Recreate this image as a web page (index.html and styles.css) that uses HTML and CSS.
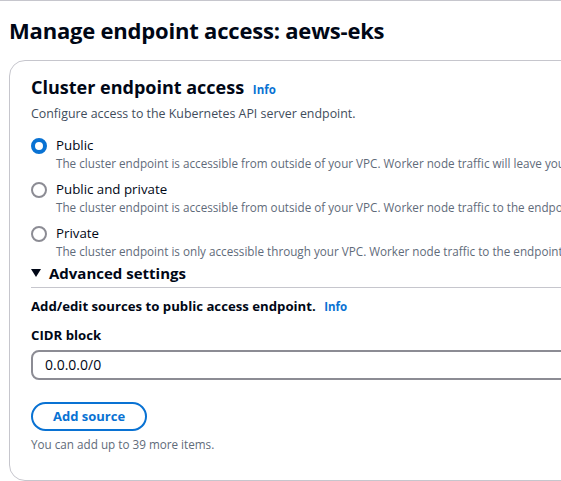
FILE: index.html
```html
<!DOCTYPE html>
<html lang="en">
<head>
<meta charset="utf-8">
<link rel="stylesheet" href="styles.css">
</head>
<body>
<div class="page">
  <h1 class="title">Manage endpoint access: aews-eks</h1>
  <div class="card">
    <div class="card-head">
      <h2 class="card-title">Cluster endpoint access <a class="info" href="#">Info</a></h2>
      <p class="card-desc">Configure access to the Kubernetes API server endpoint.</p>
    </div>
    <div class="radios">
      <label class="radio">
        <span class="dot checked"></span>
        <span class="rtext">
          <span class="rlabel">Public</span>
          <span class="rdesc">The cluster endpoint is accessible from outside of your VPC. Worker node traffic will leave your VPC to connect to the endpoint.</span>
        </span>
      </label>
      <label class="radio">
        <span class="dot"></span>
        <span class="rtext">
          <span class="rlabel">Public and private</span>
          <span class="rdesc">The cluster endpoint is accessible from outside of your VPC. Worker node traffic to the endpoint will stay within your VPC.</span>
        </span>
      </label>
      <label class="radio">
        <span class="dot"></span>
        <span class="rtext">
          <span class="rlabel">Private</span>
          <span class="rdesc">The cluster endpoint is only accessible through your VPC. Worker node traffic to the endpoint will stay within your VPC.</span>
        </span>
      </label>
    </div>
    <div class="adv">
      <div class="adv-head"><span class="caret"></span>Advanced settings</div>
      <div class="adv-body">
        <div class="sources">Add/edit sources to public access endpoint. <a class="info" href="#">Info</a></div>
        <div class="field-label">CIDR block</div>
        <div class="input">0.0.0.0/0</div>
        <button class="btn">Add source</button>
        <div class="hint">You can add up to 39 more items.</div>
      </div>
    </div>
  </div>
</div>
</body>
</html>
```
FILE: styles.css
```css
html, body {
  margin: 0;
  padding: 0;
  background: #ffffff;
  overflow: hidden;
}
body {
  font-family: "Open Sans", "Noto Sans", sans-serif;
  color: #000716;
  border-top: 1px solid #c6c6cd;
}
.page {
  padding: 0 0 0 9px;
  width: 800px;
}
.title {
  margin: 0;
  padding-top: 12px;
  font-size: 22px;
  line-height: 34px;
  font-weight: 700;
  letter-spacing: -0.2px;
}
.card {
  margin-top: 13px;
  border: 1px solid #c6c6cd;
  border-radius: 16px;
  padding: 12px 20px 20px 21px;
  height: 387px;
}
.card-title {
  margin: 0;
  font-size: 18px;
  line-height: 28px;
  font-weight: 700;
}
.info {
  font-size: 11.5px;
  font-weight: 700;
  color: #0972d3;
  text-decoration: none;
  margin-left: 4px;
  letter-spacing: 0;
}
.card-desc {
  margin: 0;
  font-size: 12.4px;
  line-height: 20px;
  color: #414d5c;
}
.radios {
  margin-top: 11px;
  display: flex;
  flex-direction: column;
  gap: 8px;
}
.radio {
  display: flex;
  gap: 9px;
  align-items: flex-start;
}
.dot {
  width: 12px;
  height: 12px;
  border: 2px solid #8c8c94;
  border-radius: 50%;
  margin-top: 3px;
  flex: none;
  box-sizing: content-box;
}
.dot.checked {
  width: 8px;
  height: 8px;
  border: 4px solid #0972d3;
}
.rtext {
  display: flex;
  flex-direction: column;
}
.rlabel {
  font-size: 13.3px;
  line-height: 20px;
}
.rdesc {
  font-size: 11.7px;
  line-height: 16px;
  color: #5f6b7a;
  white-space: nowrap;
}
.adv-head {
  margin-top: 3px;
  font-size: 15px;
  line-height: 22px;
  font-weight: 700;
  display: flex;
  align-items: center;
  padding-bottom: 3px;
  border-bottom: 1px solid #c6c6cd;
}
.caret {
  width: 0;
  height: 0;
  border-left: 5px solid transparent;
  border-right: 5px solid transparent;
  border-top: 8px solid #000716;
  margin-right: 8px;
}
.adv-body {
  padding-top: 8px;
}
.sources {
  font-size: 13.2px;
  line-height: 20px;
  font-weight: 700;
}
.sources .info {
  margin-left: 5px;
}
.field-label {
  margin-top: 8px;
  font-size: 13.2px;
  line-height: 20px;
  font-weight: 700;
}
.input {
  margin-top: 5px;
  height: 26px;
  border: 2px solid #8c8c94;
  border-radius: 8px;
  padding: 0 12px;
  font-size: 14px;
  line-height: 26px;
  width: 700px;
}
.btn {
  margin-top: 22px;
  display: block;
  font-family: inherit;
  background: #fff;
  border: 2px solid #0972d3;
  color: #0972d3;
  border-radius: 20px;
  font-size: 13px;
  font-weight: 700;
  padding: 0;
  height: 29px;
  line-height: 25px;
  width: 116px;
  white-space: nowrap;
  text-align: center;
}
.hint {
  margin-top: 5px;
  font-size: 11.7px;
  line-height: 16px;
  color: #5f6b7a;
}
```
